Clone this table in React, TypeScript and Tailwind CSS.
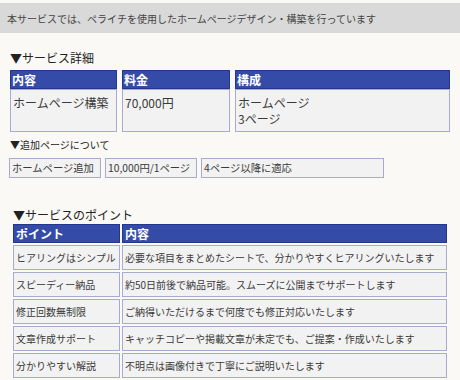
import React from "react";

const font = { fontFamily: '"Noto Sans CJK JP", "Noto Sans", sans-serif' };

export default function App() {
  const points: [string, string][] = [
    ["ヒアリングはシンプル", "必要な項目をまとめたシートで、分かりやすくヒアリングいたします"],
    ["スピーディー納品", "約50日前後で納品可能。スムーズに公開までサポートします"],
    ["修正回数無制限", "ご納得いただけるまで何度でも修正対応いたします"],
    ["文章作成サポート", "キャッチコピーや掲載文章が未定でも、ご提案・作成いたします"],
    ["分かりやすい解説", "不明点は画像付きで丁寧にご説明いたします"],
  ];
  return (
    <div className="w-[460px] h-[380px] overflow-hidden bg-[#faf9f5] text-[#3a3a3a] flex flex-col" style={font}>
      <div className="mt-[3px] h-[30px] bg-[#d9d9d9] px-[7px] flex items-center text-[10px] text-[#444]">
        本サービスでは、ペライチを使用したホームページデザイン・構築を行っています
      </div>

      <div className="mt-[17px] ml-[10px] text-[12px] leading-[16px] text-[#222]">▼サービス詳細</div>
      <div className="mt-[4px] ml-[10px] grid grid-cols-[107px_108px_215px] gap-x-[5px]">
        {["内容", "料金", "構成"].map((h) => (
          <div key={h} className="h-[19px] bg-[#344ca8] border border-[#23358c] text-white text-[12px] font-semibold flex items-center pl-[1px] leading-none">
            {h}
          </div>
        ))}
        <div className="h-[43px] bg-[#f2f2f2] border border-[#a7abcf] text-[12px] leading-[16px] pt-[5px] pl-[2px]">ホームページ構築</div>
        <div className="h-[43px] bg-[#f2f2f2] border border-[#a7abcf] text-[12px] leading-[16px] pt-[5px] pl-[2px]">70,000円</div>
        <div className="h-[43px] bg-[#f2f2f2] border border-[#a7abcf] text-[12px] leading-[16px] pt-[5px] pl-[2px]">
          <div>ホームページ</div>
          <div>3ページ</div>
        </div>
      </div>

      <div className="mt-[6px] ml-[10px] text-[10px] leading-[14px] text-[#222]">▼追加ページについて</div>
      <div className="mt-[6px] ml-[9px] flex gap-x-[4px]">
        {[
          ["ホームページ追加", "w-[92px]"],
          ["10,000円/1ページ", "w-[92px]"],
          ["4ページ以降に適応", "w-[183px]"],
        ].map(([t, w]) => (
          <div key={t} className={`${w} h-[20px] bg-[#f2f2f2] border border-[#a7abcf] text-[10.3px] flex items-center pl-[2px] whitespace-nowrap overflow-hidden`}>
            {t}
          </div>
        ))}
      </div>

      <div className="mt-[29px] ml-[13px] text-[12px] leading-[16px] text-[#222]">▼サービスのポイント</div>
      <div className="mt-[1px] ml-[13px] grid grid-cols-[107px_325px] gap-[2px]">
        <div className="h-[19px] bg-[#344ca8] border border-[#23358c] text-white text-[12px] font-semibold flex items-center pl-[2px] leading-none">ポイント</div>
        <div className="h-[19px] bg-[#344ca8] border border-[#23358c] text-white text-[12px] font-semibold flex items-center pl-[2px] leading-none">内容</div>
        {points.map(([a, b]) => (
          <React.Fragment key={a}>
            <div className="h-[25px] bg-[#f2f2f2] border border-[#a7abcf] text-[10px] flex items-center pl-[2px] whitespace-nowrap">{a}</div>
            <div className="h-[25px] bg-[#f2f2f2] border border-[#a7abcf] text-[10px] flex items-center pl-[2px] whitespace-nowrap">{b}</div>
          </React.Fragment>
        ))}
      </div>
    </div>
  );
}
